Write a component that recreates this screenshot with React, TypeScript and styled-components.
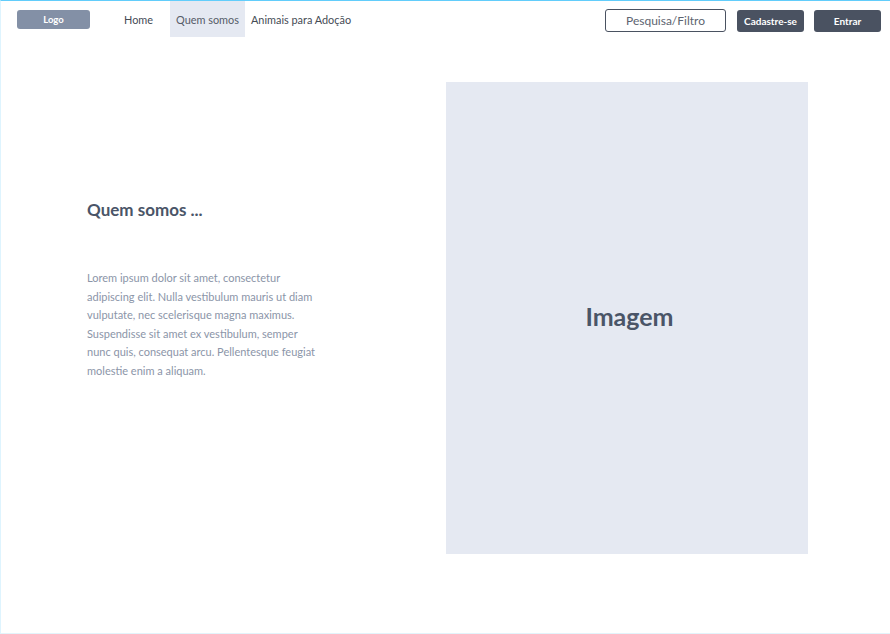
import React from "react";
import styled, { createGlobalStyle } from "styled-components";

const navy = "#4a5261";
const slate = "#4a5568";
const muted = "#8b95a8";
const pale = "#e5e9f2";

const GlobalStyle = createGlobalStyle`
  html, body {
    margin: 0;
    padding: 0;
    background: #ffffff;
  }
  * {
    box-sizing: border-box;
  }
  body {
    font-family: Lato, "Noto Sans", sans-serif;
  }
`;

const Frame = styled.div`
  width: 890px;
  height: 634px;
  border-top: 1px solid #62cdfb;
  border-left: 1px solid #def4fe;
  border-bottom: 1px solid #e3f4fb;
  display: flex;
  flex-direction: column;
  overflow: hidden;
`;

const TopBar = styled.header`
  display: flex;
  align-items: flex-start;
  height: 36px;
  padding-left: 16px;
  padding-right: 9px;
`;

const Logo = styled.div`
  margin-top: 9px;
  width: 73px;
  height: 19px;
  border-radius: 3px;
  background: #8390a6;
  color: #ffffff;
  font-size: 9.5px;
  font-weight: 700;
  display: flex;
  align-items: center;
  justify-content: center;
`;

const Nav = styled.nav`
  display: flex;
  margin-left: 28px;
`;

const NavItem = styled.a<{ $active?: boolean }>`
  height: 36px;
  padding: 0 6px;
  display: flex;
  align-items: center;
  font-size: 10.9px;
  color: ${(p) => (p.$active ? "#555c68" : "#454b55")};
  background: ${(p) => (p.$active ? pale : "transparent")};
  text-decoration: none;
  cursor: pointer;

  &:first-child {
    margin-right: 11px;
  }
`;

const Actions = styled.div`
  margin-left: auto;
  margin-top: 8px;
  display: flex;
  align-items: center;
  gap: 10px;
`;

const Search = styled.div`
  width: 121px;
  height: 23px;
  border: 1.5px solid ${navy};
  border-radius: 3px;
  display: flex;
  align-items: center;
  justify-content: center;
  font-size: 12px;
  color: #5d6470;
  margin-right: 1px;
`;

const DarkButton = styled.button<{ $width: number }>`
  width: ${(p) => p.$width}px;
  height: 22px;
  border: none;
  border-radius: 3px;
  background: ${navy};
  color: #ffffff;
  font-family: Lato, "Noto Sans", sans-serif;
  font-size: 10px;
  font-weight: 700;
  padding: 0;
  cursor: pointer;
`;

const Main = styled.main`
  display: flex;
  align-items: flex-start;
  padding-top: 45px;
`;

const TextColumn = styled.section`
  width: 445px;
  padding-left: 86px;
  padding-top: 117px;
`;

const Heading = styled.h1`
  margin: 0;
  font-size: 17px;
  font-weight: 700;
  color: ${slate};
  line-height: 22px;
`;

const Body = styled.p`
  margin: 48px 0 0;
  width: 234px;
  font-size: 11px;
  line-height: 18.6px;
  color: ${muted};
`;

const ImageBox = styled.div`
  width: 362px;
  height: 472px;
  padding: 0 0 4px 5px;
  background: ${pale};
  display: flex;
  align-items: center;
  justify-content: center;
  font-size: 25px;
  font-weight: 700;
  color: ${slate};
`;

export default function App() {
  return (
    <>
      <GlobalStyle />
      <Frame>
        <TopBar>
          <Logo>Logo</Logo>
          <Nav>
            <NavItem>Home</NavItem>
            <NavItem $active>Quem somos</NavItem>
            <NavItem>Animais para Adoção</NavItem>
          </Nav>
          <Actions>
            <Search>Pesquisa/Filtro</Search>
            <DarkButton $width={67}>Cadastre-se</DarkButton>
            <DarkButton $width={67}>Entrar</DarkButton>
          </Actions>
        </TopBar>
        <Main>
          <TextColumn>
            <Heading>Quem somos ...</Heading>
            <Body>
              Lorem ipsum dolor sit amet, consectetur adipiscing elit. Nulla
              vestibulum mauris ut diam vulputate, nec scelerisque magna
              maximus. Suspendisse sit amet ex vestibulum, semper nunc quis,
              consequat arcu. Pellentesque feugiat molestie enim a aliquam.
            </Body>
          </TextColumn>
          <ImageBox>Imagem</ImageBox>
        </Main>
      </Frame>
    </>
  );
}
